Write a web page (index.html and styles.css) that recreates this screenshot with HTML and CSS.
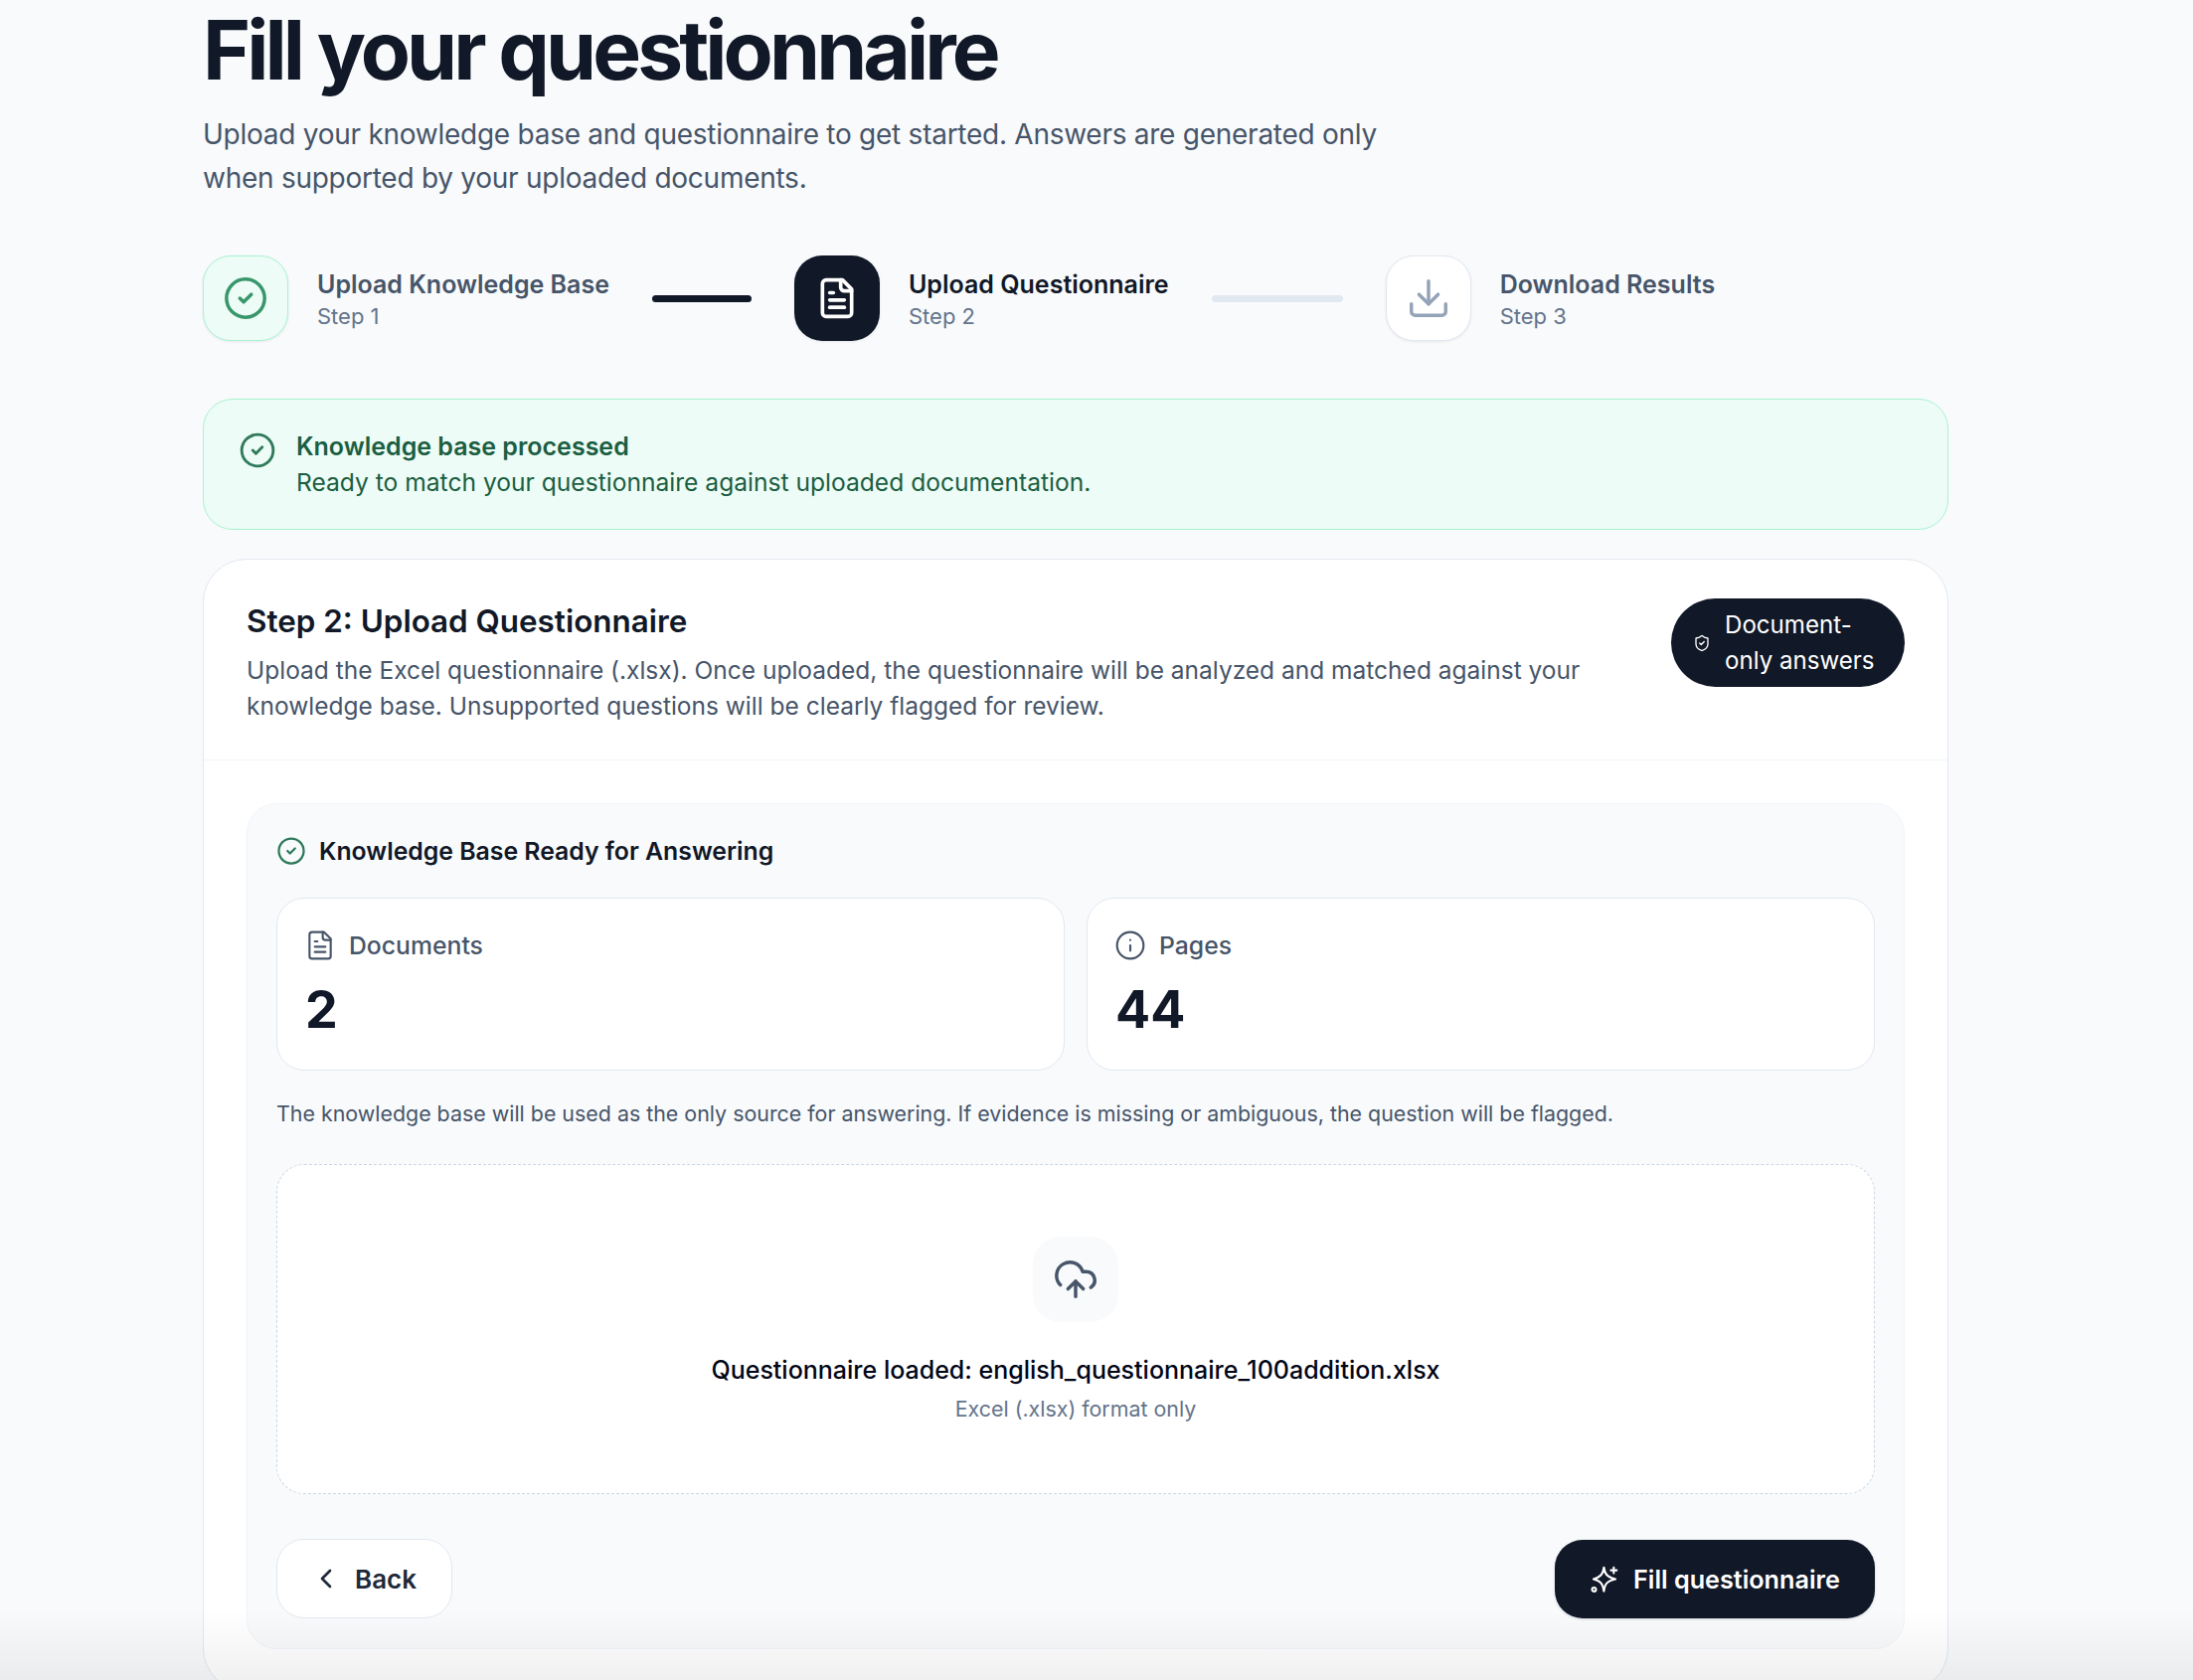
FILE: index.html
```html
<!DOCTYPE html>
<html lang="en">
<head>
    <meta charset="UTF-8">
    <meta name="viewport" content="width=device-width, initial-scale=1.0">
    <title>Fill your questionnaire</title>
    <link rel="stylesheet" href="styles.css">
</head>
<body>
    <div class="page">
        <h1>Fill your questionnaire</h1>
        <p class="intro">Upload your knowledge base and questionnaire to get started. Answers are generated only when supported by your uploaded documents.</p>

        <div class="stepper">
            <div class="step">
                <div class="step-tile tile-done">
                    <svg class="step-icon" viewBox="0 0 24 24"><circle cx="12" cy="12" r="10"/><path d="m9 12 2 2 4-4"/></svg>
                </div>
                <div>
                    <div class="step-name">Upload Knowledge Base</div>
                    <div class="step-num">Step 1</div>
                </div>
            </div>
            <div class="step-line line-done"></div>
            <div class="step">
                <div class="step-tile tile-active">
                    <svg class="step-icon" viewBox="0 0 24 24"><path d="M15 2H6a2 2 0 0 0-2 2v16a2 2 0 0 0 2 2h12a2 2 0 0 0 2-2V7Z"/><path d="M14 2v4a2 2 0 0 0 2 2h4"/><path d="M10 9H8"/><path d="M16 13H8"/><path d="M16 17H8"/></svg>
                </div>
                <div>
                    <div class="step-name name-active">Upload Questionnaire</div>
                    <div class="step-num">Step 2</div>
                </div>
            </div>
            <div class="step-line line-todo"></div>
            <div class="step">
                <div class="step-tile tile-todo">
                    <svg class="step-icon" viewBox="0 0 24 24"><path d="M12 15V3"/><path d="M21 15v4a2 2 0 0 1-2 2H5a2 2 0 0 1-2-2v-4"/><path d="m7 10 5 5 5-5"/></svg>
                </div>
                <div>
                    <div class="step-name">Download Results</div>
                    <div class="step-num">Step 3</div>
                </div>
            </div>
        </div>

        <div class="alert">
            <svg class="alert-icon" viewBox="0 0 24 24"><circle cx="12" cy="12" r="10"/><path d="m9 12 2 2 4-4"/></svg>
            <div>
                <div class="alert-title">Knowledge base processed</div>
                <div>Ready to match your questionnaire against uploaded documentation.</div>
            </div>
        </div>

        <div class="card">
            <div class="card-head">
                <div class="card-text">
                    <h2>Step 2: Upload Questionnaire</h2>
                    <p>Upload the Excel questionnaire (.xlsx). Once uploaded, the questionnaire will be analyzed and matched against your knowledge base. Unsupported questions will be clearly flagged for review.</p>
                </div>
                <div class="pill">
                    <svg class="pill-icon" viewBox="0 0 24 24"><path d="M20 13c0 5-3.500 7.500-7.660 8.950a1 1 0 0 1-.67-.01C7.500 20.500 4 18 4 13V6a1 1 0 0 1 1-1c2 0 4.500-1.200 6.240-2.720a1.170 1.170 0 0 1 1.520 0C14.510 3.810 17 5 19 5a1 1 0 0 1 1 1z"/><path d="m9 12 2 2 4-4"/></svg>
                    <span>Document-only answers</span>
                </div>
            </div>

            <div class="card-body">
                <div class="panel">
                    <div class="panel-title">
                        <svg class="panel-icon" viewBox="0 0 24 24"><circle cx="12" cy="12" r="10"/><path d="m9 12 2 2 4-4"/></svg>
                        Knowledge Base Ready for Answering
                    </div>
                    <div class="stats">
                        <div class="stat">
                            <div class="stat-label">
                                <svg class="stat-icon" viewBox="0 0 24 24"><path d="M15 2H6a2 2 0 0 0-2 2v16a2 2 0 0 0 2 2h12a2 2 0 0 0 2-2V7Z"/><path d="M14 2v4a2 2 0 0 0 2 2h4"/><path d="M10 9H8"/><path d="M16 13H8"/><path d="M16 17H8"/></svg>
                                Documents
                            </div>
                            <div class="stat-value">2</div>
                        </div>
                        <div class="stat">
                            <div class="stat-label">
                                <svg class="stat-icon" viewBox="0 0 24 24"><circle cx="12" cy="12" r="10"/><path d="M12 16v-4"/><path d="M12 8h.01"/></svg>
                                Pages
                            </div>
                            <div class="stat-value">44</div>
                        </div>
                    </div>
                    <p class="note">The knowledge base will be used as the only source for answering. If evidence is missing or ambiguous, the question will be flagged.</p>

                    <div class="dropzone">
                        <div class="drop-tile">
                            <svg class="drop-icon" viewBox="0 0 24 24"><path d="M12 13v8"/><path d="M4 14.899A7 7 0 1 1 15.710 8h1.790a4.500 4.500 0 0 1 2.500 8.242"/><path d="m8 17 4-4 4 4"/></svg>
                        </div>
                        <div class="drop-title">Questionnaire loaded: english_questionnaire_100addition.xlsx</div>
                        <div class="drop-sub">Excel (.xlsx) format only</div>
                    </div>

                    <div class="actions">
                        <button class="btn btn-back" type="button">
                            <svg class="back-icon" viewBox="0 0 24 24"><path d="m15 18-6-6 6-6"/></svg>
                            Back
                        </button>
                        <button class="btn btn-fill" type="button">
                            <svg class="fill-icon" viewBox="0 0 24 24"><path d="M11.500 1.500c.8 6 3 8.500 10 10-7 1.500-9.200 4-10 10.500-.8-6.500-3-9-9-10.500 6-1.500 8.200-4 9-10Z"/><path d="M20 1.500v5"/><path d="M17.500 4h5"/><circle cx="3" cy="20.500" r="1.700"/></svg>
                            Fill questionnaire
                        </button>
                    </div>
                </div>
            </div>
        </div>
    </div>
    <div class="bottom-fade"></div>
</body>
</html>
```

FILE: styles.css
```css
* {
    margin: 0;
    padding: 0;
    box-sizing: border-box;
    font-family: "Inter", sans-serif;
}
html, body {
    height: 1690px;
    overflow: hidden;
}
body {
    background-color: #f8fafc;
    color: #111827;
    position: relative;
}
svg {
    fill: none;
    stroke: currentColor;
    stroke-linecap: round;
    stroke-linejoin: round;
    stroke-width: 1.8;
    flex-shrink: 0;
}
.page {
    width: 1756px;
    margin-left: 204px;
    padding-top: 6px;
}
h1 {
    font-size: 82px;
    font-weight: 700;
    line-height: 90px;
    letter-spacing: -3.9px;
}
.intro {
    width: 1240px;
    margin-top: 17px;
    font-size: 28px;
    line-height: 44px;
    letter-spacing: -0.26px;
    color: #475569;
}

/* Stepper */
.stepper {
    display: flex;
    align-items: center;
    gap: 43px;
    margin-top: 56px;
}
.step {
    display: flex;
    align-items: center;
    gap: 29px;
}
.step-tile {
    width: 86px;
    height: 86px;
    border-radius: 28px;
    display: flex;
    align-items: center;
    justify-content: center;
    box-shadow: 0 1px 3px rgba(15, 23, 42, 0.08);
}
.step-icon {
    width: 46px;
    height: 46px;
}
.tile-done {
    background: #edfcf6;
    border: 1px solid #a7f3d0;
    color: #38966b;
}
.tile-active {
    background: #111827;
    color: #fff;
}
.tile-active .step-icon {
    stroke-width: 2;
    width: 44px;
    height: 44px;
}
.tile-todo {
    background: #fff;
    border: 1px solid #e2e8f0;
    color: #94a3b8;
}
.step-name {
    font-size: 25px;
    font-weight: 600;
    line-height: 37px;
    color: #475569;
}
.name-active {
    color: #111827;
}
.step-num {
    font-size: 22px;
    line-height: 27px;
    color: #64748b;
}
.step-line {
    height: 7px;
    border-radius: 4px;
}
.line-done {
    width: 100px;
    background: #111827;
}
.line-todo {
    width: 132px;
    background: #e2e8f0;
}

/* Alert */
.alert {
    display: flex;
    align-items: flex-start;
    gap: 20px;
    margin-top: 58px;
    padding: 29px 35px;
    background: #edfcf6;
    border: 1px solid #a7f3d0;
    border-radius: 30px;
    color: #1b5e42;
    font-size: 24.6px;
    line-height: 36px;
}
.alert-icon {
    width: 38px;
    height: 38px;
    margin-top: 3px;
    color: #2f7a5a;
}
.alert-title {
    font-size: 25px;
    font-weight: 600;
}

/* Main card */
.card {
    margin-top: 29px;
    background: #fff;
    border: 1px solid #e2e8f0;
    border-radius: 44px;
}
.card-head {
    display: flex;
    align-items: flex-start;
    justify-content: space-between;
    gap: 40px;
    padding: 39px 43px 36px;
    border-bottom: 1px solid #f1f5f9;
}
.card-text {
    flex: 1;
}
.card-text h2 {
    font-size: 31.4px;
    font-weight: 600;
    line-height: 46px;
}
.card-text p {
    margin-top: 8px;
    font-size: 24.5px;
    line-height: 36px;
    color: #475569;
}
.pill {
    width: 235px;
    height: 89px;
    flex-shrink: 0;
    display: flex;
    align-items: center;
    gap: 14px;
    padding: 0 22px;
    background: #111827;
    border-radius: 45px;
    color: #fff;
    font-size: 24.1px;
    line-height: 36px;
}
.pill-icon {
    width: 18px;
    height: 18px;
}
.card-body {
    padding: 43px 43px 42px;
}
.panel {
    padding: 29px 29px 30px;
    background: #f8fafc;
    border: 1px solid #f1f5f9;
    border-radius: 30px;
}
.panel-title {
    display: flex;
    align-items: center;
    gap: 13px;
    font-size: 24.8px;
    font-weight: 600;
    line-height: 36px;
}
.panel-icon {
    width: 30px;
    height: 30px;
    color: #2f7a5a;
}

/* Stats */
.stats {
    display: grid;
    grid-template-columns: 1fr 1fr;
    gap: 22px;
    margin-top: 29px;
}
.stat {
    height: 174px;
    padding: 29px 27px 27px;
    background: #fff;
    border: 1px solid #e2e8f0;
    border-radius: 28px;
}
.stat-label {
    display: flex;
    align-items: center;
    gap: 13px;
    font-size: 24.75px;
    font-weight: 500;
    line-height: 36px;
    color: #475569;
}
.stat-icon {
    width: 32px;
    height: 32px;
    stroke-width: 1.6;
}
.stat-value {
    margin-top: 14px;
    padding-left: 1px;
    font-size: 52px;
    font-weight: 700;
    line-height: 66px;
}
.note {
    margin-top: 27px;
    font-size: 21.4px;
    line-height: 32px;
    color: #475569;
}

/* Upload box */
.dropzone {
    display: flex;
    flex-direction: column;
    align-items: center;
    height: 332px;
    margin-top: 35px;
    padding-top: 72px;
    background: #fff;
    border: 1px dashed #cbd5e1;
    border-radius: 28px;
}
.drop-tile {
    width: 86px;
    height: 86px;
    display: flex;
    align-items: center;
    justify-content: center;
    background: #f8fafc;
    border-radius: 28px;
    color: #475569;
}
.drop-icon {
    width: 46px;
    height: 46px;
}
.drop-title {
    margin-top: 30px;
    font-size: 25px;
    font-weight: 500;
    line-height: 36px;
    color: #020617;
}
.drop-sub {
    margin-top: 5px;
    font-size: 21.4px;
    line-height: 32px;
    color: #64748b;
}

/* Buttons */
.actions {
    display: flex;
    justify-content: space-between;
    align-items: flex-end;
    margin-top: 45px;
}
.btn {
    height: 80px;
    display: flex;
    align-items: center;
    border-radius: 28px;
    font-size: 26px;
    font-weight: 600;
}
.btn-back {
    width: 177px;
    gap: 13px;
    padding-left: 33px;
    background: #fff;
    border: 1px solid #e2e8f0;
    color: #1e293b;
}
.back-icon {
    width: 32px;
    height: 32px;
    stroke-width: 2;
}
.btn-fill {
    width: 322px;
    height: 79px;
    gap: 15px;
    padding-left: 36px;
    background: #111827;
    border: none;
    color: #fff;
    font-size: 25.2px;
    box-shadow: 0 1px 3px rgba(15, 23, 42, 0.15);
}
.fill-icon {
    width: 28px;
    height: 28px;
}

/* fades out the page at the window's bottom edge */
.bottom-fade {
    position: absolute;
    left: 0;
    right: 0;
    bottom: 0;
    height: 70px;
    background: linear-gradient(to bottom, rgba(0, 0, 0, 0), rgba(0, 0, 0, 0.06));
}
```
